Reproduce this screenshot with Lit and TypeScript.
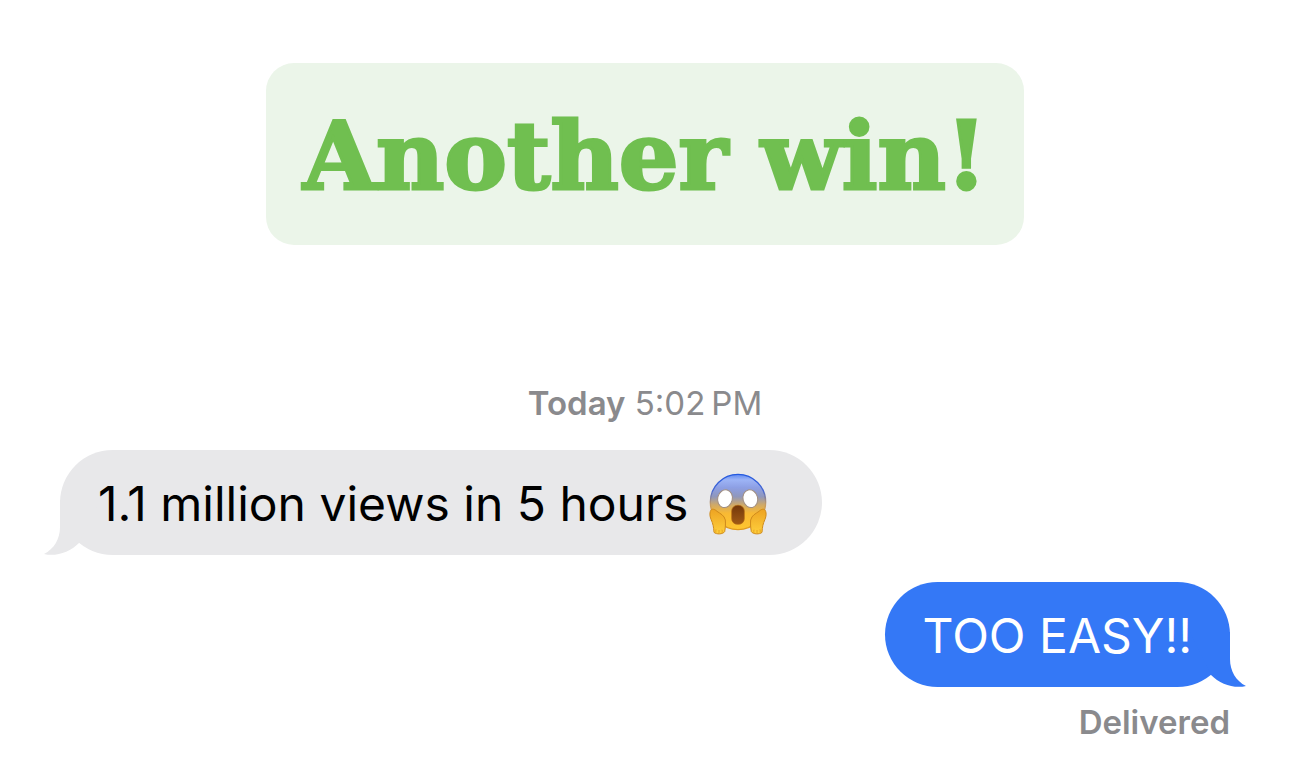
import { LitElement, html, css, svg } from "lit";
import { customElement, property } from "lit/decorators.js";

@customElement("scream-emoji")
export class ScreamEmoji extends LitElement {
  static styles = css`
    :host { display: inline-flex; }
    .face { display: block; width: 58px; height: 62px; }
  `;

  private hand() {
    return svg`
      <path d="M31 137 C34 127 44 130 51 137 C61 144 73 149 76 163 C77 175 76 188 74 198 C69 206 49 207 42 200 C41 184 39 174 33 161 C29 151 29 143 31 137Z"
        fill="url(#skin)" stroke="#cf8a1c" stroke-width="3"></path>
      <path d="M48 201 C47 197 47 194 48 191 M57 203 V193 M66 202 C67 198 67 195 66 192" fill="none" stroke="#dc9118" stroke-width="2"></path>`;
  }

  render() {
    return html`<svg class="face" viewBox="27 22 174 186" role="img" aria-label="Face screaming in fear">
      <defs>
        <linearGradient id="head" x1="0" y1="0" x2="0" y2="1">
          <stop offset="0" stop-color="#5f8af2"></stop>
          <stop offset=".1" stop-color="#9db4f6"></stop>
          <stop offset=".24" stop-color="#8d9fe4"></stop>
          <stop offset=".4" stop-color="#8f97bd"></stop>
          <stop offset=".55" stop-color="#cfa968"></stop>
          <stop offset=".7" stop-color="#f8b934"></stop>
          <stop offset="1" stop-color="#ffc62f"></stop>
        </linearGradient>
        <linearGradient id="rim" x1="0" y1="0" x2="0" y2="1">
          <stop offset="0" stop-color="#2459df"></stop>
          <stop offset=".3" stop-color="#4667d2"></stop>
          <stop offset=".55" stop-color="#c89c60"></stop>
          <stop offset="1" stop-color="#e09a1d"></stop>
        </linearGradient>
        <linearGradient id="skin" x1="0" y1="0" x2="0" y2="1">
          <stop offset="0" stop-color="#eda322"></stop>
          <stop offset="1" stop-color="#ffd03d"></stop>
        </linearGradient>
        <linearGradient id="mouth" x1="0" y1="0" x2="0" y2="1">
          <stop offset="0" stop-color="#74380a"></stop>
          <stop offset="1" stop-color="#a05a16"></stop>
        </linearGradient>
      </defs>
      <circle cx="114" cy="109" r="83" fill="url(#head)" stroke="url(#rim)" stroke-width="4"></circle>
      <ellipse cx="75" cy="99" rx="22" ry="27" transform="rotate(14 75 99)" fill="#fff" stroke="#a08e80" stroke-width="3"></ellipse>
      <ellipse cx="151" cy="99" rx="22" ry="27" transform="rotate(-14 151 99)" fill="#fff" stroke="#a08e80" stroke-width="3"></ellipse>
      <rect x="95" y="119" width="38" height="57" rx="17" fill="url(#mouth)" stroke="#b56b12" stroke-width="2"></rect>
      ${this.hand()}
      <g transform="translate(228 0) scale(-1 1)">${this.hand()}</g>
    </svg>`;
  }
}

@customElement("chat-bubble")
export class ChatBubble extends LitElement {
  @property({ reflect: true }) side: "received" | "sent" = "received";

  static styles = css`
    :host {
      display: flex;
      color: #000;
      --bubble: #e8e8ea;
    }
    :host([side="sent"]) {
      justify-content: flex-end;
      color: #fff;
      --bubble: #3478f6;
    }
    .bubble {
      position: relative;
      display: flex;
      align-items: center;
      box-sizing: border-box;
      min-height: 105px;
      padding: 21px 38px 19px;
      border-radius: 53px;
      background: var(--bubble);
      font-size: 48px;
      line-height: 64px;
    }
    .tail {
      position: absolute;
      left: -16px;
      bottom: 0;
      width: 56px;
      height: 55px;
      fill: var(--bubble);
    }
    :host([side="sent"]) .tail {
      left: auto;
      right: -16px;
      transform: scaleX(-1);
    }
    .content {
      position: relative;
      display: flex;
      align-items: center;
      gap: 21px;
    }
  `;

  render() {
    return html`<div class="bubble">
      <svg class="tail" viewBox="0 0 56 55" aria-hidden="true">
        <path d="M16 0V27C16 39 10 49 0 54C12 57 26 52 35 43L56 0Z"></path>
      </svg>
      <div class="content"><slot></slot></div>
    </div>`;
  }
}

@customElement("app-root")
export class AppRoot extends LitElement {
  static styles = css`
    :host {
      display: block;
      min-height: 100vh;
      background: #fff;
      font-family: Inter, "Liberation Sans", sans-serif;
    }
    .page {
      display: flex;
      flex-direction: column;
      padding: 63px 60px 40px;
    }
    .banner {
      align-self: center;
      margin: 0;
      padding: 38px 37px 34px;
      border-radius: 28px;
      background: #ebf5e9;
      color: #70bf50;
      font-family: "DejaVu Serif", serif;
      font-size: 94px;
      font-weight: 700;
      line-height: 110px;
      white-space: nowrap;
      -webkit-text-stroke: 3px #70bf50;
    }
    .stamp,
    .status {
      margin: 0;
      color: #8a8a8d;
      font-size: 33px;
      line-height: 40px;
    }
    .stamp {
      margin-top: 138px;
      text-align: center;
    }
    .day,
    .status { font-weight: 600; }
    .thread {
      display: flex;
      flex-direction: column;
      gap: 27px;
      margin-top: 27px;
    }
    .status {
      margin-top: 15px;
      text-align: right;
    }
    .room { padding-right: 17px; }
  `;

  render() {
    return html`<main class="page">
      <h1 class="banner">Another win!</h1>
      <p class="stamp"><span class="day">Today</span> 5:02&#8239;PM</p>
      <section class="thread" aria-label="Messages">
        <chat-bubble side="received">
          <span>1.1 million views in 5 hours</span>
          <scream-emoji class="room"></scream-emoji>
        </chat-bubble>
        <chat-bubble side="sent"><span>TOO EASY!!</span></chat-bubble>
      </section>
      <p class="status">Delivered</p>
    </main>`;
  }
}
